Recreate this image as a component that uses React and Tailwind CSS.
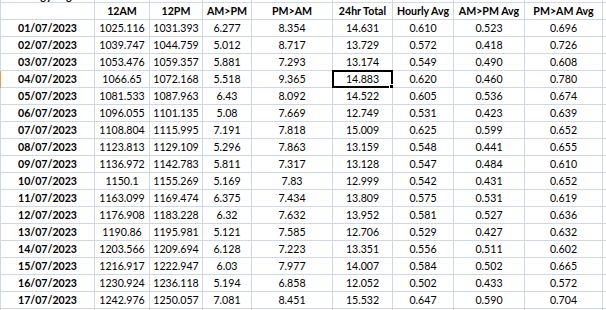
const HEAD = ["", "12AM", "12PM", "AM>PM", "PM>AM", "24hr Total", "Hourly Avg", "AM>PM Avg", "PM>AM Avg"];

const ROWS = [
  ["01/07/2023", "1025.116", "1031.393", "6.277", "8.354", "14.631", "0.610", "0.523", "0.696"],
  ["02/07/2023", "1039.747", "1044.759", "5.012", "8.717", "13.729", "0.572", "0.418", "0.726"],
  ["03/07/2023", "1053.476", "1059.357", "5.881", "7.293", "13.174", "0.549", "0.490", "0.608"],
  ["04/07/2023", "1066.65", "1072.168", "5.518", "9.365", "14.883", "0.620", "0.460", "0.780"],
  ["05/07/2023", "1081.533", "1087.963", "6.43", "8.092", "14.522", "0.605", "0.536", "0.674"],
  ["06/07/2023", "1096.055", "1101.135", "5.08", "7.669", "12.749", "0.531", "0.423", "0.639"],
  ["07/07/2023", "1108.804", "1115.995", "7.191", "7.818", "15.009", "0.625", "0.599", "0.652"],
  ["08/07/2023", "1123.813", "1129.109", "5.296", "7.863", "13.159", "0.548", "0.441", "0.655"],
  ["09/07/2023", "1136.972", "1142.783", "5.811", "7.317", "13.128", "0.547", "0.484", "0.610"],
  ["10/07/2023", "1150.1", "1155.269", "5.169", "7.83", "12.999", "0.542", "0.431", "0.652"],
  ["11/07/2023", "1163.099", "1169.474", "6.375", "7.434", "13.809", "0.575", "0.531", "0.619"],
  ["12/07/2023", "1176.908", "1183.228", "6.32", "7.632", "13.952", "0.581", "0.527", "0.636"],
  ["13/07/2023", "1190.86", "1195.981", "5.121", "7.585", "12.706", "0.529", "0.427", "0.632"],
  ["14/07/2023", "1203.566", "1209.694", "6.128", "7.223", "13.351", "0.556", "0.511", "0.602"],
  ["15/07/2023", "1216.917", "1222.947", "6.03", "7.977", "14.007", "0.584", "0.502", "0.665"],
  ["16/07/2023", "1230.924", "1236.118", "5.194", "6.858", "12.052", "0.502", "0.433", "0.572"],
  ["17/07/2023", "1242.976", "1250.057", "7.081", "8.451", "15.532", "0.647", "0.590", "0.704"],
];

const COLS = "grid grid-cols-[1px_94px_55px_53px_49px_81px_60px_61px_71px_78px_1fr]";
const CELL = "border-r border-b border-[#d0d7e5] flex items-end justify-center pb-[2px] leading-none whitespace-nowrap";

function Row({ cells, bold, selected }) {
  return (
    <div className={`${COLS} h-[17px]`}>
      <div className={selected ? "bg-[#f29a3c]" : "bg-[#d0d7e5]"} />
      {cells.map((c, i) => (
        <div key={i} className={`${CELL} relative ${bold || i === 0 ? "font-bold" : ""}`}>
          {c}
          {selected && i === 5 && (
            <div className="absolute -left-[1px] -top-[1px] w-[61px] h-[18px] border-2 border-black">
              <div className="absolute -right-[3px] -bottom-[3px] w-[5px] h-[5px] bg-black border border-white" />
            </div>
          )}
        </div>
      ))}
      <div className="border-b border-[#d0d7e5]" />
    </div>
  );
}

export default function App() {
  return (
    <div className="w-[606px] h-[310px] overflow-hidden bg-white text-black text-[10.6px] font-['Lato',sans-serif]">
      {/* row above the header, scrolled almost out of view */}
      <div className={`${COLS} h-[3px] overflow-hidden`}>
        <div className="bg-[#d0d7e5]" />
        <div className="border-r border-b border-[#d0d7e5] relative overflow-hidden">
          <span className="absolute left-[17px] -top-[10px] font-bold text-[11px] leading-none">Energy Log</span>
        </div>
        {[0, 1, 2, 3, 4, 5, 6, 7].map(i => (
          <div key={i} className="border-r border-b border-[#d0d7e5]" />
        ))}
        <div className="border-b border-[#d0d7e5]" />
      </div>
      <Row cells={HEAD} bold />
      {ROWS.map((r, i) => (
        <Row key={i} cells={r} selected={i === 3} />
      ))}
      <div className={`${COLS} h-[20px]`}>
        <div className="bg-[#d0d7e5]" />
        {[0, 1, 2, 3, 4, 5, 6, 7, 8].map(i => (
          <div key={i} className="border-r border-[#d0d7e5]" />
        ))}
      </div>
    </div>
  );
}
